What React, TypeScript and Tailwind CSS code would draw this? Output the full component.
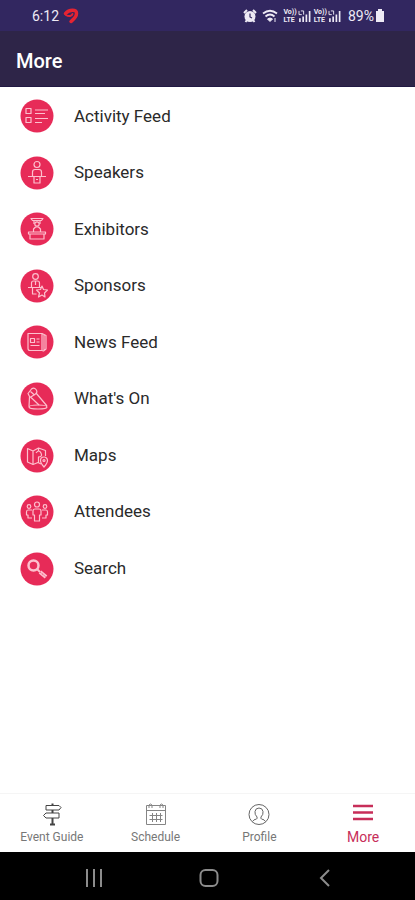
import type { ReactNode } from "react";

const menuItems: { label: string; icon: ReactNode }[] = [
  {
    label: "Activity Feed",
    icon: (
      <>
        <rect x="6" y="9.5" width="5" height="5" />
        <rect x="6" y="18.5" width="5" height="5" />
        <path d="M15 11H28M15 14.5H25M15 19.5H28M15 23.5H22" />
      </>
    ),
  },
  {
    label: "Speakers",
    icon: (
      <>
        <circle cx="17" cy="8.5" r="3" />
        <path d="M12.5 20V16Q12.5 13.5 15 13.5H19Q21.5 13.5 21.5 16V20M8 20.5H26M14 20.5V27H20V20.5M16 23.5H18" />
      </>
    ),
  },
  {
    label: "Exhibitors",
    icon: (
      <>
        <path d="M11 6.5H23L21.5 8.5H12.5Z" />
        <circle cx="17" cy="12" r="2.2" />
        <path d="M14 9V12M20 9V12M13.5 20V17L15.5 15H18.5L20.5 17V20M8.5 20H25.5V22H8.5ZM10 22V27H24V22" />
      </>
    ),
  },
  {
    label: "Sponsors",
    icon: (
      <>
        <circle cx="15.5" cy="7.5" r="2.8" />
        <path d="M11.5 18V14Q11.5 12 13.5 12H17.5Q19.5 12 19.5 14V18M8 18.5H21M12.5 18.5V25H16.5M15.5 12V16" />
        <path d="M22 17L23.5 20.500L27.500 21L24.500 24L25 28L22 26L18.500 28L19.500 24L16.500 21L20.500 20.500Z" />
      </>
    ),
  },
  {
    label: "News Feed",
    icon: (
      <>
        <path d="M8 8.5H22V25.5H10Q8 25.5 8 23.5ZM22 8.5L26 10.5V24L23.5 26L22 25.5M24 10V25" />
        <path d="M10.5 13.5H14.5V17.5H10.5ZM16.5 14H19.5M16.5 17H19.5M10.5 20.5H19.5" />
      </>
    ),
  },
  {
    label: "What's On",
    icon: (
      <>
        <path d="M8 11.5L11.5 7Q14 5 16 7.5T15.500 12L10 15.500Z" />
        <path d="M10.5 9.5L14.5 13M9.500 15L9 24.500M16 11L27 24" />
        <ellipse cx="18" cy="25" rx="9" ry="2" />
        <path d="M11 15.5L19 23" />
      </>
    ),
  },
  {
    label: "Maps",
    icon: (
      <>
        <path d="M21 25L18 23.5L13 25.5L7.5 23V9.5L13 12L18.5 9L25.5 11.5V17M13 12V25.5M18.5 9V12M18.5 18V23.5" />
        <path d="M16 14Q19 10 21 14T18 18M24 28Q20.5 24 20.5 21.5A3.5 3.5 0 0 1 27.5 21.5Q27.5 24 24 28Z" />
        <circle cx="24" cy="21.5" r="1" />
      </>
    ),
  },
  {
    label: "Attendees",
    icon: (
      <>
        <circle cx="17" cy="9.5" r="2.5" />
        <path d="M13 20V16Q13 14 15 14H19Q21 14 21 16V20H19.5V26H14.5V20Z" />
        <circle cx="9" cy="11.5" r="1.8" />
        <circle cx="25" cy="11.5" r="1.8" />
        <path d="M12 15H8Q6.5 15 6.5 17V20H8V23H12M22 15H26Q27.5 15 27.5 17V20H26V23H22" />
      </>
    ),
  },
  {
    label: "Search",
    icon: (
      <>
        <circle cx="13.5" cy="13.5" r="5" strokeWidth="2.5" />
        <path d="M17.5 17.5L20 20" strokeWidth="2" />
        <path d="M20 20L26 25" strokeWidth="4" />
        <path d="M20.5 20.5L25.5 24.5" stroke="#e72b58" strokeWidth="1" strokeDasharray="1 1" />
      </>
    ),
  },
];

const tabs: { label: string; icon: ReactNode }[] = [
  {
    label: "Event Guide",
    icon: (
      <g stroke="#444444">
        <path d="M5 3.5H18L20 5.5L18 8H5Z" />
        <path d="M18 11H5L2.5 13.5L5 16H18Z" />
        <path d="M11.5 1.5V3.5M11.5 8V11M11.5 16V22M9 22.5H14" strokeWidth="2" />
      </g>
    ),
  },
  {
    label: "Schedule",
    icon: (
      <g stroke="#858585">
        <path d="M1.5 3.5H20.5V22.5H1.5ZM1.5 8.5H20.5" />
        <path d="M4.5 13.5H17.5M4.5 17.5H17.5M7.5 11V20M11.5 11V20M15.5 11V20" />
        <path d="M4 6V3Q5.5 1 7 3V6M15 6V3Q16.5 1 18 3V6" />
      </g>
    ),
  },
  {
    label: "Profile",
    icon: (
      <g stroke="#666666">
        <circle cx="11" cy="12.5" r="10" />
        <path d="M4.5 19.5Q5.5 17.5 8.5 17Q9.5 16.5 9 15Q6.5 12.5 7 9.5Q7.5 6 11 6T15 9.5Q15.5 12.5 13 15Q12.5 16.5 13.5 17Q16.5 17.5 17.5 19.5" />
      </g>
    ),
  },
  {
    label: "More",
    icon: <path d="M1 4H21M1 10.5H21M1 17H21" stroke="#c72e59" strokeWidth="2.5" />,
  },
];

function SimSignal() {
  return (
    <span className="flex items-center">
      <span className="flex flex-col text-[7px] leading-[8px] font-bold">
        <span>Vo))</span>
        <span>LTE</span>
      </span>
      <svg viewBox="0 0 15 13" className="h-3 w-4" fill="none" stroke="currentColor">
        <path d="M1 1V5H4M3 1H6V5" />
        <path d="M2 13V9M5.5 13V7M9 13V5M12.5 13V1" strokeWidth="1.8" />
      </svg>
    </span>
  );
}

function StatusBar() {
  return (
    <div className="flex h-[31px] items-center justify-between bg-[#322760] pr-[30px] pl-8 text-sm text-[#eeeaf5]">
      <div className="flex items-center gap-1">
        <span>6:12</span>
        <svg viewBox="0 0 16 16" className="size-4" fill="none" stroke="#e52432" strokeLinecap="round">
          <path d="M2.5 5.5C6 1 14 1 13.5 5.5C13.5 9 11 11 8 13.5" strokeWidth="3.5" />
          <path d="M3 7C6 9 9 8 9.5 6" strokeWidth="2" />
        </svg>
      </div>
      <div className="flex items-center gap-px">
        <svg viewBox="0 0 14 14" className="mr-1 size-[14px]" fill="currentColor">
          <circle cx="7" cy="7.5" r="5.5" />
          <path d="M1 4L4 1M13 4L10 1M2.5 13L4 11M11.5 13L10 11" stroke="currentColor" strokeWidth="2" />
          <path d="M7 4.5V8L9 9" fill="none" stroke="#322760" strokeWidth="1.2" />
        </svg>
        <svg viewBox="0 0 16 14" className="mr-1 h-[14px] w-4" fill="none" stroke="currentColor" strokeWidth="1.8">
          <path d="M1 4.5Q8 -1 15 4.5M3.5 7.5Q8 3.5 12.5 7.5" />
          <path d="M5.5 10Q8 8 10.5 10L8 12.5Z" fill="currentColor" strokeWidth="1" />
          <path d="M13 9V13" strokeWidth="1" />
        </svg>
        <SimSignal />
        <SimSignal />
        <span className="ml-1">89%</span>
        <svg viewBox="0 0 10 13" className="h-[13px] w-[10px]" fill="currentColor">
          <path d="M3 0H7V2H9V13H1V2H3Z" />
        </svg>
      </div>
    </div>
  );
}

export default function App() {
  return (
    <div className="flex min-h-screen flex-col bg-white font-[Roboto,sans-serif]">
      <StatusBar />
      <header className="flex h-14 items-center border-b border-[#211943] bg-[#2e2548] px-4 pt-1">
        <h1 className="text-xl font-medium text-white">More</h1>
      </header>

      <main className="flex-1">
        <ul className="grid h-[509px] auto-rows-fr">
          {menuItems.map((item) => (
            <li key={item.label} className="flex">
              <a href="#" className="flex flex-1 items-center gap-5 px-5 pt-0.5 text-[17px] text-[#2a2a2a]">
                <svg
                  viewBox="0 0 34 34"
                  className="size-[34px]"
                  fill="none"
                  stroke="#fdc0ce"
                  strokeWidth="1.2"
                  strokeLinejoin="round"
                  aria-hidden="true"
                >
                  <circle cx="17" cy="17" r="16.5" fill="#e72b58" stroke="none" />
                  {item.icon}
                </svg>
                {item.label}
              </a>
            </li>
          ))}
        </ul>
      </main>

      <nav className="grid h-[59px] grid-cols-4 border-t border-[#f5f5f5]">
        {tabs.map((tab) => (
          <a
            key={tab.label}
            href="#"
            className={
              tab.label === "More"
                ? "flex flex-col items-center gap-px pt-2 text-sm text-[#c72e59]"
                : "flex flex-col items-center gap-px pt-2 text-xs leading-5 text-[#777777]"
            }
          >
            <svg viewBox="0 0 22 24" className="h-6 w-[22px]" fill="none" aria-hidden="true">
              {tab.icon}
            </svg>
            {tab.label}
          </a>
        ))}
      </nav>

      <div className="flex h-12 items-center justify-around bg-black pt-1 pr-8 pl-9 text-[#8c8c8c]">
        <button type="button" aria-label="Recent apps">
          <svg viewBox="0 0 20 20" className="size-5" fill="none" stroke="currentColor" strokeWidth="2">
            <path d="M3 1V19M10 1V19M17 1V19" />
          </svg>
        </button>
        <button type="button" aria-label="Home">
          <svg viewBox="0 0 20 20" className="size-5" fill="none" stroke="currentColor" strokeWidth="2">
            <rect x="1.5" y="2" width="17" height="16" rx="5" />
          </svg>
        </button>
        <button type="button" aria-label="Back">
          <svg viewBox="0 0 20 20" className="size-5" fill="none" stroke="currentColor" strokeWidth="2">
            <path d="M14 2L6 10L14 18" />
          </svg>
        </button>
      </div>
    </div>
  );
}
